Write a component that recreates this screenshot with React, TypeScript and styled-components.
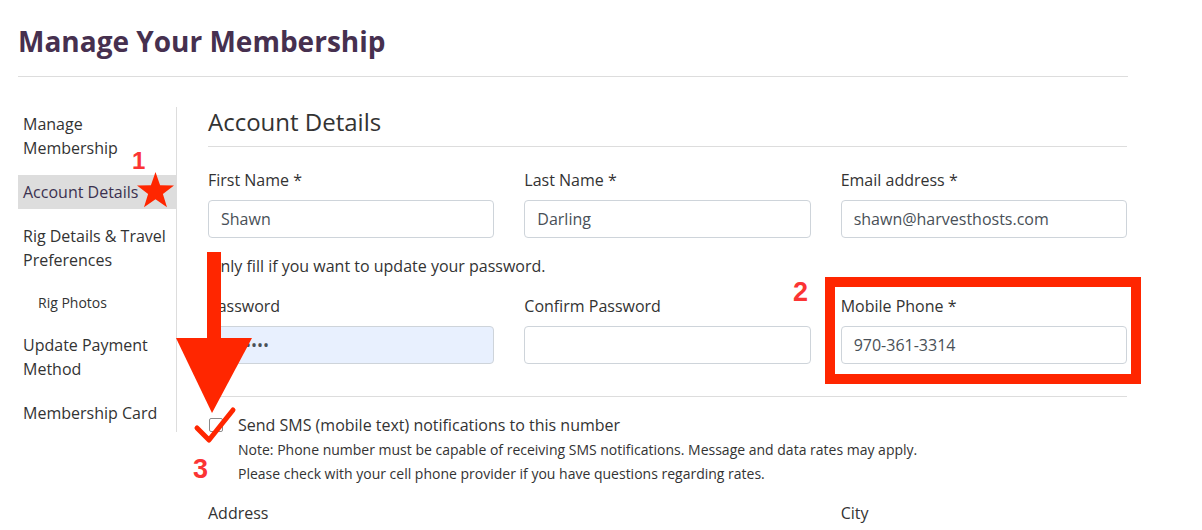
import React from "react";
import styled, { createGlobalStyle } from "styled-components";

const Global = createGlobalStyle`
  html, body {
    margin: 0;
    padding: 0;
    background: #fff;
    font-family: "Open Sans", "Liberation Sans", sans-serif;
    color: #333;
  }
`;

const Page = styled.div`
  position: relative;
  width: 1202px;
  height: 530px;
  overflow: hidden;
  box-sizing: border-box;
  padding: 24px 0 0 18px;
`;

const Title = styled.h1`
  margin: 0;
  font-size: 28px;
  line-height: 34px;
  font-weight: 700;
  color: #46304f;
`;

const Rule = styled.hr`
  width: 1110px;
  margin: 18px 0 0;
  border: 0;
  border-top: 1px solid #ddd;
`;

const Body = styled.div`
  display: flex;
  margin-top: 30px;
`;

const Sidebar = styled.nav`
  width: 159px;
  box-sizing: border-box;
  border-right: 1px solid #ddd;
  display: flex;
  flex-direction: column;
  gap: 10px;
  padding-bottom: 2px;
  align-self: flex-start;
`;

const NavItem = styled.div<{ $active?: boolean; $sub?: boolean }>`
  padding: 5px 5px 5px ${(p) => (p.$sub ? "20px" : "5px")};
  font-size: ${(p) => (p.$sub ? "14px" : "16px")};
  line-height: ${(p) => (p.$sub ? "21px" : "24px")};
  background: ${(p) => (p.$active ? "#ddd" : "transparent")};
  color: ${(p) => (p.$active ? "#3b3150" : "#333")};
`;

const Main = styled.main`
  margin-left: 31px;
  width: 919px;
`;

const Heading = styled.h2`
  margin: 0;
  padding-bottom: 10px;
  border-bottom: 1px solid #ddd;
  font-size: 24px;
  line-height: 29px;
  font-weight: 400;
  color: #333;
`;

const Grid = styled.div<{ $top: number }>`
  display: grid;
  grid-template-columns: repeat(3, 1fr);
  column-gap: 30px;
  margin-top: ${(p) => p.$top}px;
`;

const Field = styled.div`
  display: flex;
  flex-direction: column;
`;

const Label = styled.label`
  font-size: 16px;
  line-height: 24px;
  margin-bottom: 8px;
  color: #333;
`;

const Input = styled.div<{ $autofill?: boolean }>`
  height: 38px;
  box-sizing: border-box;
  border: 1px solid #ced4da;
  border-radius: 4px;
  padding: 0 12px;
  display: flex;
  align-items: center;
  font-size: 16px;
  color: #495057;
  background: ${(p) => (p.$autofill ? "#e8f0fe" : "#fff")};
`;

const Hint = styled.p`
  margin: 16px 0 0;
  font-size: 16px;
  line-height: 24px;
`;

const Divider = styled.div`
  margin-top: 32px;
  border-top: 1px solid #ddd;
`;

const CheckRow = styled.div`
  display: flex;
  align-items: center;
  gap: 15px;
  margin-top: 16px;
  font-size: 16px;
  line-height: 24px;
`;

const Box = styled.span`
  width: 12px;
  height: 12px;
  margin-left: 1px;
  border: 1px solid #8a8a8a;
  border-radius: 2px;
  background: #fff;
`;

const Note = styled.div`
  margin-top: 1px;
  padding-left: 30px;
  font-size: 14px;
  line-height: 24px;
`;

const Num = styled.span<{ $x: number; $y: number; $size: number }>`
  position: absolute;
  left: ${(p) => p.$x}px;
  top: ${(p) => p.$y}px;
  font-family: "Liberation Sans", Arial, sans-serif;
  font-weight: 700;
  font-size: ${(p) => p.$size}px;
  line-height: 1;
  color: #fb3434;
`;

const Frame = styled.div`
  position: absolute;
  left: 825px;
  top: 277px;
  width: 316px;
  height: 107px;
  box-sizing: border-box;
  border: 10px solid #ff2600;
`;

const Overlay = styled.svg`
  position: absolute;
  left: 0;
  top: 0;
  pointer-events: none;
`;

const starPoints = (cx: number, cy: number, r: number, ri: number) => {
  const pts: string[] = [];
  for (let i = 0; i < 10; i++) {
    const rad = i % 2 === 0 ? r : ri;
    const a = (Math.PI / 5) * i - Math.PI / 2;
    pts.push(`${(cx + rad * Math.cos(a)).toFixed(1)},${(cy + rad * Math.sin(a)).toFixed(1)}`);
  }
  return pts.join(" ");
};

const App = () => {
  return (
    <Page>
      <Global />
      <Title>Manage Your Membership</Title>
      <Rule />
      <Body>
        <Sidebar>
          <NavItem>Manage<br />Membership</NavItem>
          <NavItem $active>Account Details</NavItem>
          <NavItem>Rig Details &amp; Travel<br />Preferences</NavItem>
          <NavItem $sub>Rig Photos</NavItem>
          <NavItem>Update Payment<br />Method</NavItem>
          <NavItem>Membership Card</NavItem>
        </Sidebar>
        <Main>
          <Heading>Account Details</Heading>
          <Grid $top={21}>
            <Field>
              <Label>First Name *</Label>
              <Input>Shawn</Input>
            </Field>
            <Field>
              <Label>Last Name *</Label>
              <Input>Darling</Input>
            </Field>
            <Field>
              <Label>Email address *</Label>
              <Input>shawn@harvesthosts.com</Input>
            </Field>
          </Grid>
          <Hint>Only fill if you want to update your password.</Hint>
          <Grid $top={16}>
            <Field>
              <Label>Password</Label>
              <Input $autofill>••••••••</Input>
            </Field>
            <Field>
              <Label>Confirm Password</Label>
              <Input />
            </Field>
            <Field>
              <Label>Mobile Phone *</Label>
              <Input>970-361-3314</Input>
            </Field>
          </Grid>
          <Divider />
          <CheckRow>
            <Box />
            Send SMS (mobile text) notifications to this number
          </CheckRow>
          <Note>
            Note: Phone number must be capable of receiving SMS notifications. Message and data rates may apply.
            <br />
            Please check with your cell phone provider if you have questions regarding rates.
          </Note>
          <Grid $top={15}>
            <Field>
              <Label>Address</Label>
            </Field>
            <Field />
            <Field>
              <Label>City</Label>
            </Field>
          </Grid>
        </Main>
      </Body>

      <Frame />
      <Num $x={132} $y={149} $size={24}>1</Num>
      <Num $x={793} $y={279} $size={27}>2</Num>
      <Num $x={193} $y={456} $size={27}>3</Num>
      <Overlay width={1202} height={530} viewBox="0 0 1202 530">
        <polygon points={starPoints(155.5, 191.5, 19.5, 7.8)} fill="#ff2600" />
        <rect x={207} y={252} width={14} height={90} fill="#ff2600" />
        <polygon points="176,338 252,338 212,413" fill="#ff2600" />
        <polyline
          points="197,428 209,440 233,410"
          fill="none"
          stroke="#ff2600"
          strokeWidth={5}
          strokeLinecap="round"
          strokeLinejoin="round"
        />
      </Overlay>
    </Page>
  );
};

export default App;
